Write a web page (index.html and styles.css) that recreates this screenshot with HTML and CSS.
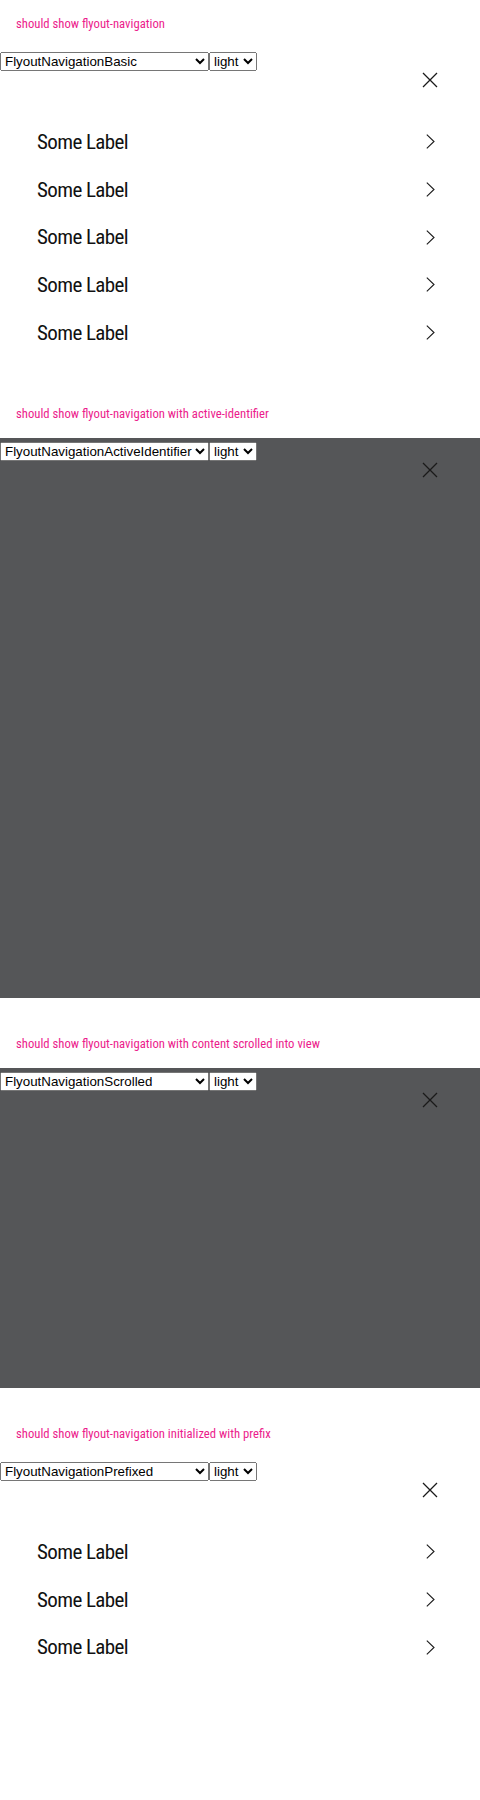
FILE: index.html
```html
<!DOCTYPE html>
<html lang="en">
<head>
<meta charset="utf-8">
<title>Flyout navigation</title>
<link rel="stylesheet" href="styles.css">
</head>
<body>
<section class="case">
  <p class="case-title">should show flyout-navigation</p>
  <div class="story">
    <div class="controls">
      <select class="sel-story"><option>FlyoutNavigationBasic</option><option>FlyoutNavigationActiveIdentifier</option><option>FlyoutNavigationScrolled</option><option>FlyoutNavigationPrefixed</option></select><select class="sel-theme"><option>light</option><option>dark</option></select>
    </div>
    <nav class="flyout">
      <div class="flyout-head"><svg class="close" viewBox="0 0 16 16" width="16" height="16"><path d="M1 1L15 15M15 1L1 15" stroke="#1a1a1a" stroke-width="1.3" fill="none"/></svg></div>
      <ul class="menu">
        <li class="item"><span>Some Label</span><svg class="chev" viewBox="0 0 9 15" width="9" height="15"><path d="M0.8 0.6L8 7.5L0.8 14.4" stroke="#1a1a1a" stroke-width="1.1" fill="none"/></svg></li>
        <li class="item"><span>Some Label</span><svg class="chev" viewBox="0 0 9 15" width="9" height="15"><path d="M0.8 0.6L8 7.5L0.8 14.4" stroke="#1a1a1a" stroke-width="1.1" fill="none"/></svg></li>
        <li class="item"><span>Some Label</span><svg class="chev" viewBox="0 0 9 15" width="9" height="15"><path d="M0.8 0.6L8 7.5L0.8 14.4" stroke="#1a1a1a" stroke-width="1.1" fill="none"/></svg></li>
        <li class="item"><span>Some Label</span><svg class="chev" viewBox="0 0 9 15" width="9" height="15"><path d="M0.8 0.6L8 7.5L0.8 14.4" stroke="#1a1a1a" stroke-width="1.1" fill="none"/></svg></li>
        <li class="item"><span>Some Label</span><svg class="chev" viewBox="0 0 9 15" width="9" height="15"><path d="M0.8 0.6L8 7.5L0.8 14.4" stroke="#1a1a1a" stroke-width="1.1" fill="none"/></svg></li>
      </ul>
    </nav>
  </div>
</section>

<section class="case">
  <p class="case-title">should show flyout-navigation with active-identifier</p>
  <div class="story story-dim story-tall">
    <div class="controls">
      <select class="sel-story"><option>FlyoutNavigationActiveIdentifier</option><option>FlyoutNavigationBasic</option><option>FlyoutNavigationScrolled</option><option>FlyoutNavigationPrefixed</option></select><select class="sel-theme"><option>light</option><option>dark</option></select>
    </div>
    <nav class="flyout">
      <div class="flyout-head"><svg class="close" viewBox="0 0 16 16" width="16" height="16"><path d="M1 1L15 15M15 1L1 15" stroke="#1a1a1a" stroke-width="1.3" fill="none"/></svg></div>
    </nav>
  </div>
</section>

<section class="case">
  <p class="case-title">should show flyout-navigation with content scrolled into view</p>
  <div class="story story-dim">
    <div class="controls">
      <select class="sel-story"><option>FlyoutNavigationScrolled</option><option>FlyoutNavigationBasic</option><option>FlyoutNavigationActiveIdentifier</option><option>FlyoutNavigationPrefixed</option></select><select class="sel-theme"><option>light</option><option>dark</option></select>
    </div>
    <nav class="flyout">
      <div class="flyout-head"><svg class="close" viewBox="0 0 16 16" width="16" height="16"><path d="M1 1L15 15M15 1L1 15" stroke="#1a1a1a" stroke-width="1.3" fill="none"/></svg></div>
    </nav>
  </div>
</section>

<section class="case">
  <p class="case-title">should show flyout-navigation initialized with prefix</p>
  <div class="story">
    <div class="controls">
      <select class="sel-story"><option>FlyoutNavigationPrefixed</option><option>FlyoutNavigationBasic</option><option>FlyoutNavigationActiveIdentifier</option><option>FlyoutNavigationScrolled</option></select><select class="sel-theme"><option>light</option><option>dark</option></select>
    </div>
    <nav class="flyout">
      <div class="flyout-head"><svg class="close" viewBox="0 0 16 16" width="16" height="16"><path d="M1 1L15 15M15 1L1 15" stroke="#1a1a1a" stroke-width="1.3" fill="none"/></svg></div>
      <ul class="menu">
        <li class="item"><span>Some Label</span><svg class="chev" viewBox="0 0 9 15" width="9" height="15"><path d="M0.8 0.6L8 7.5L0.8 14.4" stroke="#1a1a1a" stroke-width="1.1" fill="none"/></svg></li>
        <li class="item"><span>Some Label</span><svg class="chev" viewBox="0 0 9 15" width="9" height="15"><path d="M0.8 0.6L8 7.5L0.8 14.4" stroke="#1a1a1a" stroke-width="1.1" fill="none"/></svg></li>
        <li class="item"><span>Some Label</span><svg class="chev" viewBox="0 0 9 15" width="9" height="15"><path d="M0.8 0.6L8 7.5L0.8 14.4" stroke="#1a1a1a" stroke-width="1.1" fill="none"/></svg></li>
      </ul>
    </nav>
  </div>
</section>
</body>
</html>
```

FILE: styles.css
```css
html, body {
  margin: 0;
  padding: 0;
  background: #fff;
}

.case {
  margin-bottom: 22px;
}

.case-title {
  margin: 0;
  padding: 16px;
  font-family: "Liberation Sans Narrow", "Roboto Condensed", Roboto, sans-serif;
  font-size: 12.7px;
  line-height: 16px;
  color: #ec1c8c;
}

.story {
  height: 320px;
  padding-top: 4px;
  box-sizing: border-box;
  background: #fff;
  overflow: hidden;
}

.story-dim {
  background: #555658;
}

.story-tall {
  height: 560px;
}

.controls {
  display: flex;
  align-items: flex-start;
}

.controls select {
  font-family: "Liberation Sans", Arial, sans-serif;
  font-size: 13.333px;
  margin: 0;
}

.flyout-head {
  display: flex;
  justify-content: flex-end;
  padding: 1px 42px 0 0;
}

.close {
  display: block;
}

.menu {
  list-style: none;
  margin: 0;
  padding: 30px 45px 0 37px;
}

.item {
  display: flex;
  align-items: center;
  justify-content: space-between;
  height: 47.7px;
  font-family: "Liberation Sans Narrow", "Roboto Condensed", Roboto, sans-serif;
  font-weight: 400;
  font-size: 21px;
  letter-spacing: -0.6px;
  color: #111;
}

.chev {
  display: block;
}
```
